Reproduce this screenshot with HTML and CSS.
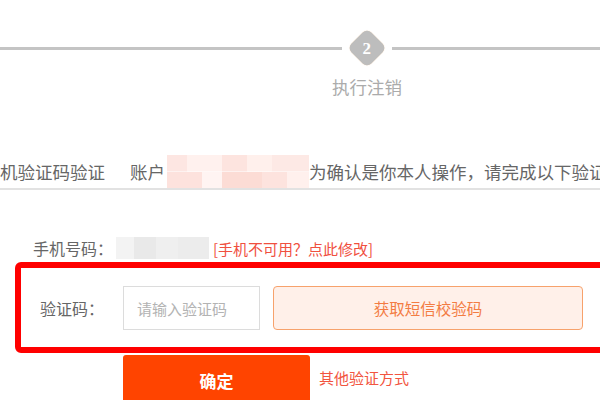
FILE: index.html
```html
<!DOCTYPE html>
<html lang="zh-CN">
<head>
    <meta charset="UTF-8">
    <title>执行注销</title>
    <link rel="stylesheet" href="styles.css">
</head>
<body>
    <div class="steps">
        <div class="steps-line steps-line-left"></div>
        <div class="step">
            <div class="step-badge"><span>2</span></div>
            <div class="step-name">执行注销</div>
        </div>
        <div class="steps-line"></div>
    </div>

    <div class="account-bar">
        <span class="tab">机验证码验证</span>
        <span class="account-label">账户</span>
        <span class="account-mask"></span>
        <span class="account-tip">为确认是你本人操作，请完成以下验证</span>
    </div>

    <div class="phone-row">
        <span class="phone-label">手机号码：</span>
        <span class="phone-mask"></span>
        <a class="phone-link" href="#">[手机不可用？点此修改]</a>
    </div>

    <div class="code-box">
        <label class="code-label" for="code">验证码：</label>
        <input class="code-input" id="code" type="text" placeholder="请输入验证码">
        <button class="code-send">获取短信校验码</button>
    </div>

    <div class="actions">
        <button class="confirm-btn">确定</button>
        <a class="other-way" href="#">其他验证方式</a>
    </div>
</body>
</html>
```

FILE: styles.css
```css
html, body {
    overflow: hidden;
}

body {
    margin: 0;
    width: 600px;
    height: 400px;
    background: #fff;
    font-family: "Noto Sans CJK SC", "Noto Sans", sans-serif;
    color: #666;
}

/* step bar */
.steps {
    display: flex;
    padding-top: 33px;
}

.steps-line {
    flex: 1;
    height: 3px;
    margin-top: 14px;
    background: #c4c4c4;
}

.steps-line-left {
    flex: 0 0 342px;
}

.step {
    width: 50px;
    display: flex;
    flex-direction: column;
    align-items: center;
}

.step-badge {
    width: 28px;
    height: 28px;
    margin-top: 1px;
    border-radius: 6px;
    background: #bdbdbd;
    box-shadow: 0 0 1px #e7c9a8;
    transform: rotate(45deg);
    display: flex;
    justify-content: center;
    align-items: center;
}

.step-badge span {
    transform: rotate(-45deg);
    color: #fff;
    font-family: "Liberation Serif", serif;
    font-weight: bold;
    font-size: 17px;
    line-height: 1;
}

.step-name {
    margin-top: 15px;
    white-space: nowrap;
    font-size: 17.5px;
    line-height: 20px;
    color: #ababab;
}

/* account line */
.account-bar {
    display: flex;
    align-items: center;
    height: 33px;
    margin-top: 58px;
    border-bottom: 2px solid #e2e2e2;
    font-size: 17.5px;
    white-space: nowrap;
    color: #666;
}

.tab {
    margin-right: 25px;
}

.account-mask {
    flex: 0 0 142px;
    height: 33px;
    margin-left: 2px;
    background:
        linear-gradient(90deg, #fde6e2 0 20px, #fff1ee 20px 55px, #fde4df 55px 80px, #fff0ec 80px 105px, #fde9e5 105px 142px) top / 100% 50% no-repeat,
        linear-gradient(90deg, #fde2dd 0 35px, #fff4f2 35px 55px, #fcdcd5 55px 95px, #fde3de 95px 120px, #fff0ed 120px 142px) bottom / 100% 50% no-repeat;
}

/* phone row */
.phone-row {
    display: flex;
    align-items: center;
    height: 22px;
    margin-top: 47px;
    padding-left: 33px;
    font-size: 16px;
    white-space: nowrap;
}

.phone-label {
    width: 83px;
}

.phone-mask {
    width: 93px;
    height: 22px;
    background: linear-gradient(90deg, #f3f3f3 0 18px, #e9e9e9 18px 40px, #efefef 40px 62px, #ececec 62px 93px);
}

.phone-link {
    margin-left: 4px;
    font-size: 15px;
    color: #f0503f;
    text-decoration: none;
}

/* highlighted code box */
.code-box {
    display: flex;
    align-items: center;
    width: 600px;
    margin: 3px 0 0 15px;
    padding: 18px 0 17px 19px;
    border: 6px solid #ff0000;
    border-radius: 6px;
}

.code-label {
    width: 83px;
    font-size: 16px;
    color: #666;
}

.code-input {
    box-sizing: border-box;
    width: 137px;
    height: 44px;
    padding: 0 13px;
    border: 1px solid #dcdcdc;
    font-family: "Noto Sans CJK SC", sans-serif;
    font-size: 15px;
    outline: none;
}

.code-input::placeholder {
    color: #b3b3b3;
}

.code-send {
    box-sizing: border-box;
    width: 310px;
    height: 44px;
    margin-left: 13px;
    border: 1.5px solid #f7a26c;
    border-radius: 4px;
    background: #fff0e9;
    color: #f37c43;
    font-family: "Noto Sans CJK SC", sans-serif;
    font-size: 15.5px;
}

/* bottom actions */
.actions {
    display: flex;
    align-items: center;
    margin-top: 2px;
    padding-left: 123px;
}

.confirm-btn {
    width: 187px;
    height: 50px;
    border: none;
    border-radius: 3px;
    background: #ff4400;
    color: #fff;
    font-family: "Noto Sans CJK SC", sans-serif;
    font-weight: bold;
    font-size: 17px;
}

.other-way {
    margin: -5px 0 0 9px;
    font-size: 15px;
    color: #f25540;
    text-decoration: none;
}
```
